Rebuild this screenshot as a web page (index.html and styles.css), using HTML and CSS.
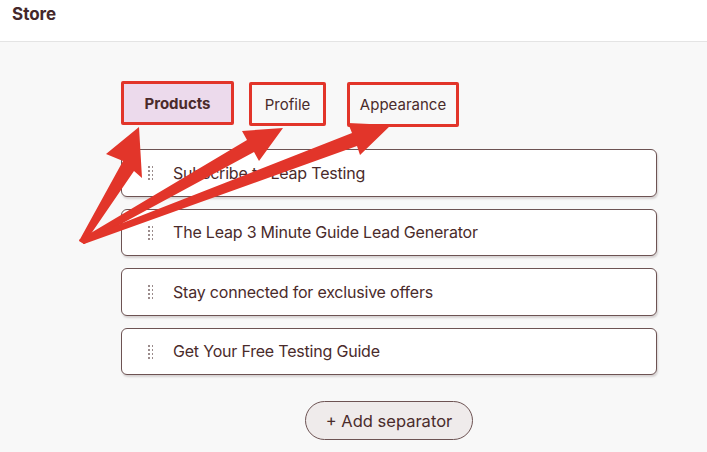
FILE: index.html
```html
<!DOCTYPE html>
<html lang="en">
<head>
  <meta charset="UTF-8">
  <title>Store</title>
  <link rel="stylesheet" href="styles.css">
</head>
<body>
  <header class="topbar">
    <h1>Store</h1>
  </header>

  <main class="store">
    <!-- Tabs -->
    <nav class="tabs">
      <button class="tab tab-products active">Products</button>
      <button class="tab tab-profile">Profile</button>
      <button class="tab tab-appearance">Appearance</button>
    </nav>

    <!-- Product list -->
    <ul class="items">
      <li class="item"><span class="handle"></span>Subscribe to Leap Testing</li>
      <li class="item"><span class="handle"></span>The Leap 3 Minute Guide Lead Generator</li>
      <li class="item"><span class="handle"></span>Stay connected for exclusive offers</li>
      <li class="item"><span class="handle"></span>Get Your Free Testing Guide</li>
    </ul>

    <div class="actions">
      <button class="add-btn">+ Add separator</button>
    </div>
  </main>

  <!-- Annotation arrows -->
  <svg class="arrows" width="707" height="452" viewBox="0 0 707 452">
    <polygon points="139,127 142,178 134,171 84,244 79,241 123,161 106,154" />
    <polygon points="283,128 259,161 254,152 84,244 79,240 247,140 242,131" />
    <polygon points="391,125 360,155 357,146 84,244 79,240 352,133 348,123" />
  </svg>
</body>
</html>
```

FILE: styles.css
```css
body {
  font-family: Inter, "Noto Sans", sans-serif;
  margin: 0;
  padding: 0;
  background-color: #f8f8f8;
  color: #4a2b2b;
  width: 707px;
  height: 452px;
  overflow: hidden;
  position: relative;
}
.topbar {
  height: 42px;
  background: #fff;
  border-bottom: 1px solid #e4e4e4;
  padding: 0 12px;
  box-sizing: border-box;
}
.topbar h1 {
  margin: 0;
  padding-top: 4px;
  font-size: 17px;
  line-height: 20px;
  font-weight: 700;
  color: #45282a;
}
.store {
  width: 536px;
  margin-left: 121px;
  padding-top: 39px;
}
.tabs {
  display: flex;
  align-items: flex-start;
}
.tab {
  font-family: inherit;
  font-size: 15px;
  color: #4a2b2b;
  background: transparent;
  height: 44px;
  border: 3px solid #e2352a;
  border-radius: 2px;
  padding: 0;
  box-sizing: border-box;
}
.tab-products {
  width: 113px;
  margin-right: 15px;
}
.tab-profile {
  width: 77px;
  margin-right: 21px;
  margin-top: 1px;
}
.tab-appearance {
  width: 112px;
  height: 45px;
  margin-top: 1px;
}
.tab.active {
  background: #ecdaec;
  font-weight: 700;
}
.items {
  list-style: none;
  margin: 22px 0 0;
  padding: 0;
  display: flex;
  flex-direction: column;
  gap: 12px;
}
.item {
  height: 47.5px;
  box-sizing: border-box;
  display: flex;
  align-items: center;
  gap: 20px;
  padding-left: 25px;
  background: #fff;
  border: 1px solid #6d5353;
  border-radius: 6px;
  box-shadow: 1px 2px 2px rgba(60, 40, 40, 0.18);
  font-size: 16px;
  letter-spacing: -0.2px;
}
.handle {
  width: 6px;
  height: 15px;
  background-image: radial-gradient(circle, #9b8c8c 0.9px, transparent 1.1px);
  background-size: 4px 4px;
}
.actions {
  display: flex;
  justify-content: center;
  margin-top: 26px;
}
.add-btn {
  font-family: inherit;
  font-size: 16.5px;
  color: #4a2b2b;
  width: 168px;
  height: 39px;
  background: #efebeb;
  border: 1px solid #6d5353;
  border-radius: 20px;
  padding: 0;
}
.arrows {
  position: absolute;
  top: 0;
  left: 0;
  pointer-events: none;
}
.arrows polygon {
  fill: #e2352a;
}
```
